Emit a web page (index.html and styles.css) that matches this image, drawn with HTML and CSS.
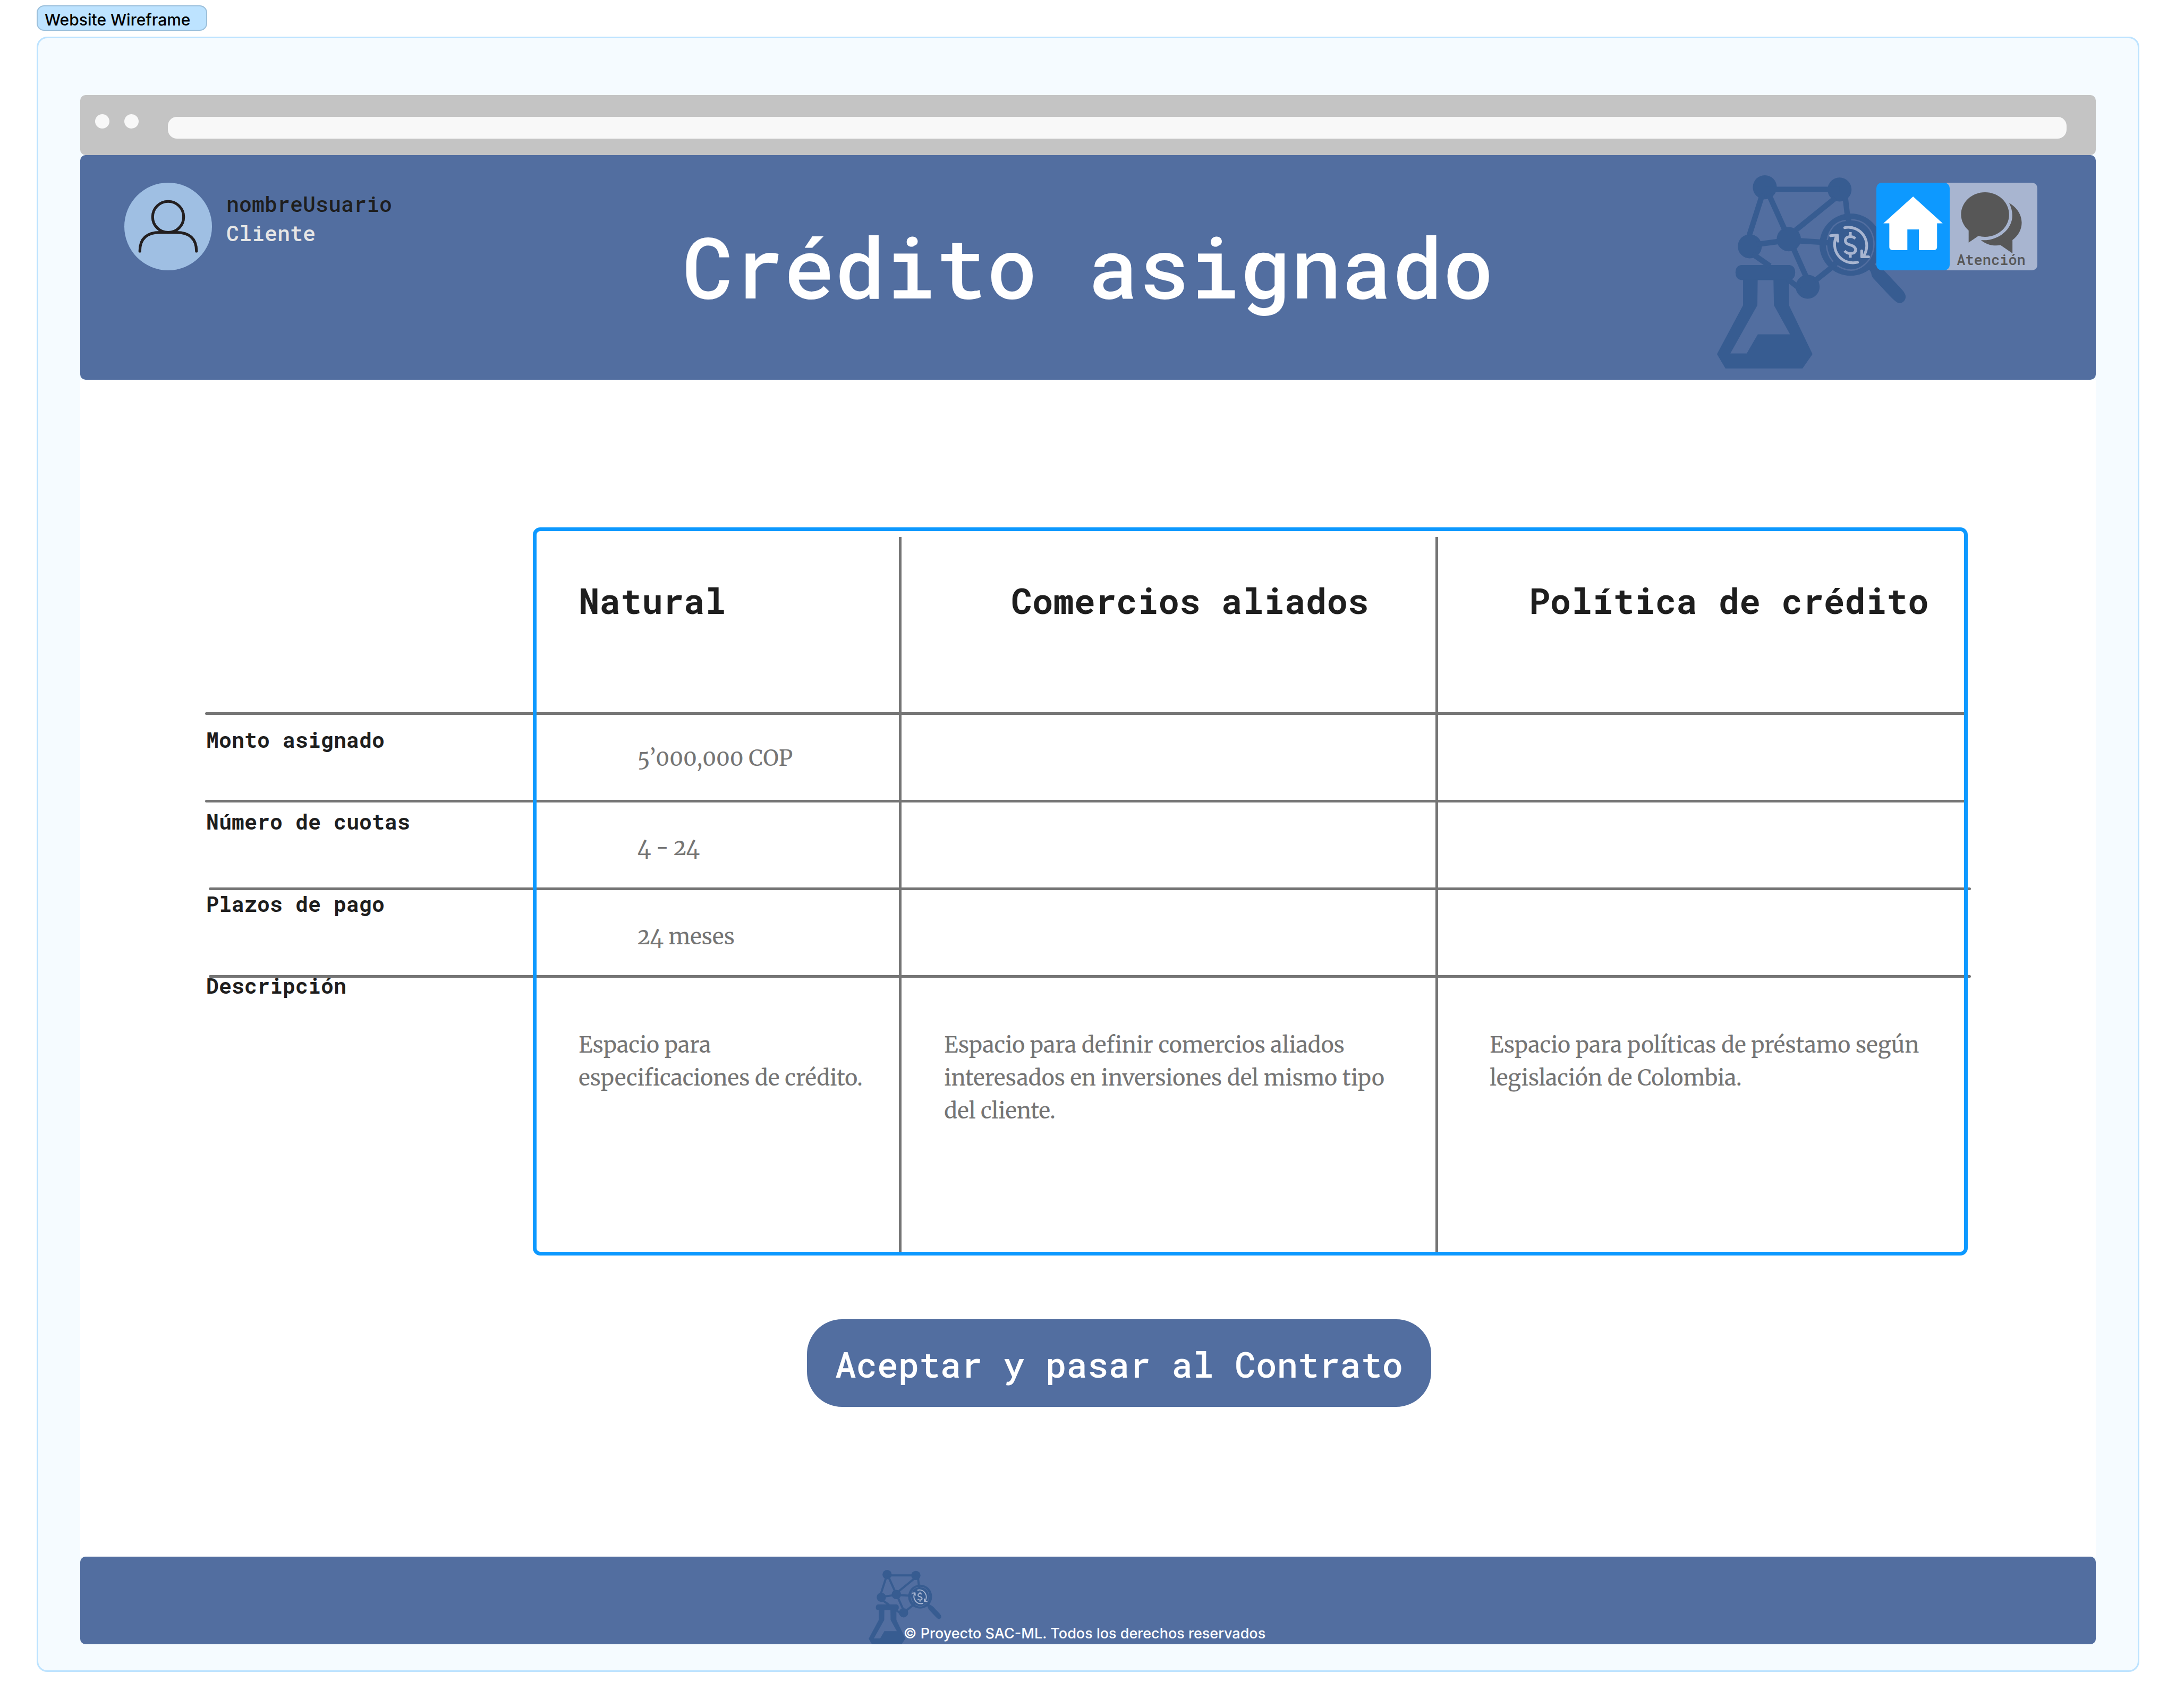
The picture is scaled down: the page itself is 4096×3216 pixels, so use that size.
FILE: index.html
```html
<!DOCTYPE html>
<html lang="es">
<head>
<meta charset="utf-8">
<title>Crédito asignado</title>
<link rel="stylesheet" href="styles.css">
</head>
<body>
<svg class="defs" aria-hidden="true">
  <symbol id="logo" viewBox="36 42 1242 1273">
    <g fill="#375c91">
      <circle cx="351" cy="121" r="79"/>
      <circle cx="843" cy="136" r="79"/>
      <circle cx="252" cy="510" r="79"/>
      <circle cx="509" cy="463" r="80"/>
      <circle cx="633" cy="776" r="79"/>
      <circle cx="916" cy="499" r="205"/>
      <path d="M1035 662Q1050 672 1054 700Q1058 714 1075 731L1180 843Q1222 886 1237 885Q1252 885 1266 872Q1279 858 1278 838Q1276 818 1250 790L1135 668L1070 628Z"/>
      <path d="M194 633H515Q551 640 551 683Q551 725 515 732H194Q158 725 158 683Q158 640 194 633Z"/>
      <path fill-rule="evenodd" d="M208 730V898L36 1220L92 1314H599L665 1220L510 898V730ZM304 732H408L411 898L517 1089H305L232 1215H124L302 898Z"/>
    </g>
    <path fill="none" stroke="#375c91" stroke-width="36" d="M351 135H843M336 165L248 440M376 165L482 400M815 192L555 403M881 190L900 350M300 497L450 477M570 473L770 486M540 525L622 708M680 738L825 622M270 560L385 640M500 725L580 788"/>
    <path fill="none" stroke="#526ea0" stroke-width="9" d="M762 468Q784 352 884 339M920 335Q1010 337 1052 415Q1092 505 1042 593Q950 714 828 637M757 504Q762 570 801 611"/>
    <g fill="none" stroke="#a8b5d0" stroke-width="18" stroke-linecap="round" stroke-linejoin="round">
      <path d="M877 387A121 121 0 0 1 1000 575M989 540V579H1034M961 615A121 121 0 0 1 825 440M784 440L829 436L832 476"/>
      <path stroke-linecap="butt" d="M947 459Q934 446 914 446Q881 448 881 474Q881 493 914 501Q949 511 949 534Q948 557 914 558Q890 556 876 540M914 416V446M914 558V585"/>
    </g>
  </symbol>
</svg>

<div class="board-label">Website Wireframe</div>
<div class="board">
  <div class="browser">
    <div class="window-bar">
      <span class="dot"></span>
      <span class="dot"></span>
      <input class="address" type="text" aria-label="Dirección">
    </div>

    <header class="top">
      <svg class="top-logo" aria-hidden="true"><use href="#logo"/></svg>
      <div class="user">
        <svg class="avatar" viewBox="0 0 192 192" aria-hidden="true">
          <circle cx="96" cy="96" r="96" fill="#9fbfe3"/>
          <g fill="none" stroke="#231f20" stroke-width="6" stroke-linecap="round">
            <circle cx="96" cy="75" r="34"/>
            <path d="M34 150C34 122 50 109 78 109H114C142 109 158 122 158 150"/>
          </g>
        </svg>
        <div class="user-text">
          <div class="user-name">nombreUsuario</div>
          <div class="user-role">Cliente</div>
        </div>
      </div>
      <h1>Crédito asignado</h1>
      <nav class="shortcuts">
        <a class="home" href="#inicio" aria-label="Inicio">
          <svg viewBox="80 213 391 354" aria-hidden="true">
            <path fill="#fff" d="M276 213L471 390H434V549Q432 565 416 567H314V430H238V567H137Q121 565 119 549V390H80Z"/>
          </svg>
        </a>
        <a class="support" href="#atencion">
          <svg viewBox="583 186 400 403" aria-hidden="true">
            <g fill="#575757">
              <path d="M741 186C829 186 900 252 900 333C900 414 829 480 741 480Q718 480 697 474L633 518V438C604 412 583 376 583 333C583 252 654 186 741 186Z"/>
              <path d="M900 257C950 284 983 334 983 387C983 432 960 475 922 501V589L843 535C795 544 748 530 714 502C830 510 921 430 921 340Q921 298 900 257Z"/>
            </g>
          </svg>
          <span>Atención</span>
        </a>
      </nav>
    </header>

    <main>
      <div class="plans">
        <table>
          <colgroup><col class="c-label"><col class="c-natural"><col class="c-allies"><col class="c-policy"></colgroup>
          <thead>
            <tr>
              <td></td>
              <th scope="col">Natural</th>
              <th scope="col" class="allies">Comercios aliados</th>
              <th scope="col" class="policy">Política de crédito</th>
            </tr>
          </thead>
          <tbody>
            <tr class="amount"><th scope="row">Monto asignado</th><td>5’000,000 COP</td><td></td><td></td></tr>
            <tr class="quotas"><th scope="row">Número de cuotas</th><td>4 - 24</td><td></td><td></td></tr>
            <tr class="terms"><th scope="row">Plazos de pago</th><td>24 meses</td><td></td><td></td></tr>
            <tr class="details">
              <th scope="row">Descripción</th>
              <td>Espacio para<br>especificaciones de crédito.</td>
              <td class="allies">Espacio para definir comercios aliados<br>interesados en inversiones del mismo tipo<br>del cliente.</td>
              <td class="policy">Espacio para políticas de préstamo según<br>legislación de Colombia.</td>
            </tr>
          </tbody>
        </table>
        <div class="frame"></div>
      </div>
      <div class="actions">
        <button class="accept" type="button">Aceptar y pasar al Contrato</button>
      </div>
    </main>

    <footer>
      <svg class="footer-logo" aria-hidden="true"><use href="#logo"/></svg>
      <p>© Proyecto SAC-ML. Todos los derechos reservados</p>
    </footer>
  </div>
</div>
</body>
</html>
```
FILE: styles.css
```css
* {
  box-sizing: border-box;
}

body {
  margin: 0;
  padding: 10px 69px 68px;
  background: #fff;
  color: #1e1e1e;
  font-family: "Roboto Mono", "DejaVu Sans Mono", monospace;
  font-size: 40px;
  font-weight: 500;
}

.defs {
  position: absolute;
  width: 0;
  height: 0;
}

.board-label {
  width: fit-content;
  height: 48px;
  margin-bottom: 11px;
  padding: 0 30px 0 13px;
  border: 2px solid #9bbfda;
  border-radius: 14px;
  background: #bde3ff;
  color: #000;
  font: 500 30px/50px Inter, sans-serif;
}

.board {
  padding: 107px 79px 49px;
  border: 3px solid #bde3ff;
  border-radius: 20px;
  background: #f5fbff;
}

.window-bar {
  display: flex;
  align-items: flex-start;
  gap: 28px;
  height: 113px;
  padding: 36px 55px 0 28px;
  border-radius: 10px;
  background: #c4c4c4;
}

.dot {
  width: 27px;
  height: 27px;
  border-radius: 50%;
  background: #f8f8f8;
}

.address {
  flex: 1;
  height: 41px;
  margin: 5px 0 0 27px;
  padding: 0 20px;
  border: 0;
  border-radius: 17px;
  background: #f8f8f8;
}

.top {
  position: relative;
  display: grid;
  grid-template-columns: 1fr auto 1fr;
  align-items: start;
  height: 423px;
  padding: 52px 83px 0;
  border-radius: 10px;
  background: #526ea0;
}

.top-logo {
  position: absolute;
  top: 38px;
  right: 357px;
  width: 357px;
  height: 364px;
}

.user {
  display: flex;
  gap: 27px;
}

.avatar {
  width: 165px;
  height: 165px;
}

.user-text {
  padding-top: 12px;
  line-height: 55px;
}

.user-role {
  color: #e6e6e6;
}

h1 {
  margin: 61px 0 0;
  color: #fff;
  font-size: 159px;
  font-weight: 500;
  line-height: 190px;
}

.shortcuts {
  position: relative;
  display: flex;
  justify-self: end;
  margin-right: 27px;
}

.home {
  z-index: 1;
  width: 138px;
  height: 165px;
  padding: 26px 13px 0;
  border-radius: 10px;
  background: #0d99ff;
}

.home svg {
  display: block;
  width: 112px;
  height: 101px;
}

.support {
  display: flex;
  flex-direction: column;
  align-items: center;
  width: 179px;
  height: 165px;
  margin-left: -14px;
  padding: 18px 9px 0 14px;
  border-radius: 10px;
  background: #a8b5d0;
  color: #575757;
  font-size: 27px;
  line-height: 24px;
  text-decoration: none;
}

.support svg {
  width: 115px;
  height: 115px;
}

main {
  padding: 278px 241px 282px 235px;
  background: #fff;
}

.plans {
  position: relative;
  padding-top: 18px;
}

table {
  width: 100%;
  border-spacing: 0;
  table-layout: fixed;
}

.c-label {
  width: 18.6%;
}

.c-natural {
  width: 20.77%;
}

.c-allies {
  width: 30.44%;
}

tr {
  position: relative;
  height: 165px;
}

th,
td {
  padding: 0;
  text-align: left;
  vertical-align: top;
}

th {
  font-weight: 700;
  line-height: 38px;
}

td {
  color: #757575;
  font: 400 41px/62px Merriweather, "Liberation Serif", serif;
  font-variant-numeric: oldstyle-nums;
}

td:nth-child(2),
thead th:nth-child(2) {
  padding-left: 86px;
}

tr > :nth-child(n + 3) {
  border-left: 5px solid #757575;
}

thead tr {
  height: 330px;
}

thead th {
  padding-top: 80px;
  font-size: 66px;
  line-height: 80px;
  white-space: nowrap;
}

thead .allies {
  padding-left: 206px;
}

thead .policy {
  padding-left: 171px;
}

tbody th {
  padding-left: 2px;
}

/* Row rules run across the whole table, under the blue frame. */
tbody th::before {
  content: "";
  position: absolute;
  top: 0;
  right: 0;
  left: 0;
  height: 5px;
  border-radius: 3px;
  background: #757575;
}

.terms th::before,
.details th::before {
  right: -6px;
  left: 7px;
}

.amount th {
  padding-top: 33px;
}

.quotas th {
  padding-top: 22px;
}

.terms th {
  padding-top: 12px;
}

.details th {
  padding-top: 1px;
}

.amount td:nth-child(2) {
  padding: 56px 0 0 197px;
  font-kerning: none;
}

.quotas td:nth-child(2) {
  padding: 59px 0 0 197px;
}

.terms td:nth-child(2) {
  padding: 62px 0 0 197px;
}

.details {
  height: 528px;
}

.details td {
  padding-top: 101px;
}

.details .allies {
  padding-left: 80px;
}

.details .policy {
  padding-left: 97px;
}

.frame {
  position: absolute;
  inset: 0 0 0 18.6%;
  border: 7px solid #0d99ff;
  border-radius: 14px;
}

.actions {
  display: flex;
  justify-content: center;
  padding: 120px 0 0 123px;
}

.accept {
  height: 165px;
  padding: 4px 53px 0;
  border: 0;
  border-radius: 66px;
  background: #526ea0;
  color: #fff;
  font-family: inherit;
  font-size: 66px;
  font-weight: 500;
}

footer {
  display: flex;
  align-items: flex-end;
  justify-content: center;
  height: 165px;
  padding-right: 79px;
  overflow: hidden;
  border-radius: 10px;
  background: #526ea0;
}

.footer-logo {
  width: 137px;
  height: 140px;
  margin-right: -71px;
}

footer p {
  z-index: 1;
  margin: 0 0 4px;
  color: #fff;
  font: 500 27px/32px Inter, sans-serif;
}
```
